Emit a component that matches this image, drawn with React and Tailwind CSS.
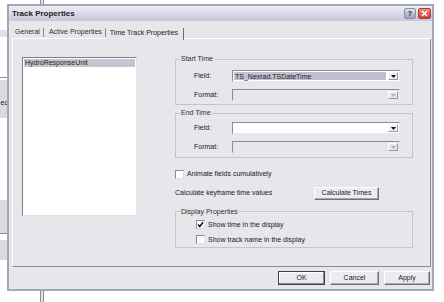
import React from 'react';

const Dropdown = ({ value, disabled, selected }) => (
  <div
    className={`flex h-[12px] w-[168px] items-stretch border border-t-[#8c8c98] border-l-[#8c8c98] border-r-[#e8e8ee] border-b-[#e8e8ee] ${
      disabled ? 'bg-[#e6e6eb]' : 'bg-white'
    }`}
  >
    <div className="flex flex-1 items-center p-[1px]">
      {value && (
        <div className={`flex h-full w-full items-center pl-[1px] ${selected ? 'bg-[#bfc1cf]' : ''}`}>
          <span className="leading-none text-[#202020]">{value}</span>
        </div>
      )}
    </div>
    <div
      className={`m-[1px] flex w-[10px] items-center justify-center border border-t-white border-l-white border-r-[#9a9aa6] border-b-[#9a9aa6] ${
        disabled ? 'bg-[#e6e6eb]' : 'bg-[#f0f0f2]'
      }`}
    >
      <svg width="5" height="3" viewBox="0 0 5 3">
        <path d="M0 0 H5 L2.5 3 Z" fill={disabled ? '#b0b0b8' : '#101010'} />
      </svg>
    </div>
  </div>
);

const Checkbox = ({ checked }) => (
  <div className="flex h-[9px] w-[9px] shrink-0 items-center justify-center border border-t-[#8a8a96] border-l-[#8a8a96] border-r-[#dcdce4] border-b-[#dcdce4] bg-white">
    {checked && (
      <svg width="7" height="7" viewBox="0 0 7 7">
        <path d="M1 3.5 L2.8 5.5 L6 1.2" stroke="#101010" strokeWidth="1.5" fill="none" />
      </svg>
    )}
  </div>
);

const Button = ({ children, width, primary }) => (
  <div
    className={`flex h-[14px] items-center justify-center border bg-[#ececf0] text-[#202020] ${
      primary
        ? 'border-[#404048] shadow-[inset_-1px_-1px_0_#8a8a96,inset_1px_1px_0_#ffffff]'
        : 'border-t-white border-l-white border-r-[#70707c] border-b-[#70707c] shadow-[inset_-1px_-1px_0_#a8a8b4]'
    }`}
    style={{ width }}
  >
    {children}
  </div>
);

const Group = ({ title, className, children }) => (
  <fieldset className={`border border-[#c4c4cc] px-[0px] ${className}`}>
    <legend className="ml-[4px] px-[1px] leading-[8px] text-[#303030]">{title}</legend>
    {children}
  </fieldset>
);

const FieldRows = ({ fieldValue, fieldSelected, fieldWhite }) => (
  <div className="flex flex-col gap-[7px] pl-[18px]">
    <div className="flex items-center">
      <span className="w-[38px] text-[#202020]">Field:</span>
      <Dropdown value={fieldValue} selected={fieldSelected} disabled={!fieldWhite} />
    </div>
    <div className="flex items-center">
      <span className="w-[38px] text-[#202020]">Format:</span>
      <Dropdown disabled />
    </div>
  </div>
);

export default function App() {
  return (
    <div className="relative h-[302px] w-[444px] overflow-hidden bg-white font-['Liberation_Sans',Arial,sans-serif] text-[7px]">
      {/* window behind the dialog */}
      <div className="absolute left-0 top-[30px] h-[7px] w-[8px] bg-[#dce1ea]" />
      <div className="absolute left-0 top-[77px] h-[1px] w-[8px] bg-[#8c8c94]" />
      <div className="absolute left-0 top-[80px] flex h-[38px] w-[8px] items-center justify-end overflow-hidden bg-[#d9d9de] pt-[8px]">
        <span className="whitespace-nowrap text-[#202020]">ec</span>
      </div>
      <div className="absolute left-0 top-[200px] h-[33px] w-[8px] bg-[#dadade]" />
      <div className="absolute left-0 top-[233px] h-[1px] w-[8px] bg-[#8c8c94]" />
      <div className="absolute left-0 top-[240px] h-[20px] w-[8px] bg-[#dadade]" />
      <div className="absolute left-[40px] top-0 h-[5px] w-[4px] border-x border-[#8a8a92] bg-[#e4e4e8]" />
      <div className="absolute left-[40px] top-[290px] h-[12px] w-[4px] border-x border-[#8a8a92] bg-[#e4e4e8]" />

      {/* dialog */}
      <div className="absolute left-[7px] top-[4px] flex h-[287px] w-[427px] flex-col border-2 border-[#a6a6b6] bg-[#e6e6eb]">
        {/* title bar */}
        <div className="flex h-[15px] items-center justify-between bg-gradient-to-b from-[#eeeef4] to-[#c6c8d8] pl-[3px] pr-[1px]">
          <span className="text-[8px] font-bold text-[#1c1c28]">Track Properties</span>
          <div className="flex gap-[2px]">
            <div className="flex h-[11px] w-[12px] items-center justify-center rounded-[2px] border border-[#8a8ea8] bg-gradient-to-b from-[#dcdeea] to-[#9fa4c0] text-[7px] font-bold leading-none text-[#202030]">
              ?
            </div>
            <div className="flex h-[11px] w-[13px] items-center justify-center rounded-[2px] border border-[#a04040] bg-gradient-to-b from-[#f08a78] to-[#d03c2c]">
              <svg width="7" height="7" viewBox="0 0 7 7">
                <path d="M1 1 L6 6 M6 1 L1 6" stroke="#ffffff" strokeWidth="1.6" />
              </svg>
            </div>
          </div>
        </div>

        {/* body */}
        <div className="flex flex-1 flex-col pl-[3px] pr-[1px] pt-[5px]">
          {/* tabs */}
          <div className="relative z-10 flex h-[13px] items-end">
            <div className="flex h-[12px] items-center border-b border-white pl-[3px] pr-[2px] text-[#303030]">
              <span className="pr-[3px]">General</span>
              <div className="h-[9px] w-[1px] bg-[#8a8a96]" />
            </div>
            <div className="flex h-[12px] items-center border-b border-white pl-[3px] text-[#303030]">
              <span className="pr-[3px]">Active Properties</span>
              <div className="h-[9px] w-[1px] bg-[#8a8a96]" />
            </div>
            <div className="flex h-[14px] -mb-[1px] items-center bg-[#e6e6eb] pl-[4px] text-[#202020]">
              <span className="pr-[5px]">Time Track Properties</span>
              <div className="h-[12px] w-[1px] self-end bg-[#6e6e7a]" />
            </div>
            <div className="flex-1 border-b border-white" />
          </div>

          {/* tab panel */}
          <div className="flex h-[228px] border-b border-r border-b-[#8a8a96] border-r-[#8a8a96] border-l border-l-white pl-[9px] pt-[18px]">
            {/* list */}
            <div className="h-[159px] w-[115px] border border-t-[#7c7c88] border-l-[#7c7c88] border-r-[#e2e2e8] border-b-[#e2e2e8] bg-white p-[1px]">
              <div className="flex h-[8px] items-center bg-[#c6c6d2] pl-[1px] text-[#202020]">HydroResponseUnit</div>
            </div>

            {/* right column */}
            <div className="ml-[38px] -mt-[2px] flex w-[238px] flex-col">
              <Group title="Start Time" className="pb-[3px]">
                <div className="pt-[7px]">
                  <FieldRows fieldValue="TS_Nexrad.TSDateTime" fieldSelected fieldWhite />
                </div>
              </Group>

              <Group title="End Time" className="mt-[4px] pb-[4px]">
                <div className="pt-[5px]">
                  <FieldRows fieldWhite />
                </div>
              </Group>

              <div className="mt-[11px] flex items-center gap-[3px]">
                <Checkbox />
                <span className="text-[#202020]">Animate fields cumulatively</span>
              </div>

              <div className="mt-[7px] flex items-center">
                <span className="w-[139px] text-[#202020]">Calculate keyframe time values</span>
                <div className="flex h-[13px] w-[65px] items-center justify-center border border-t-white border-l-white border-r-[#70707c] border-b-[#70707c] bg-[#ececf0] text-[#202020] shadow-[inset_-1px_-1px_0_#a8a8b4]">
                  Calculate Times
                </div>
              </div>

              <Group title="Display Properties" className="mt-[8px] pb-[3px]">
                <div className="flex flex-col gap-[6px] pl-[20px] pt-[4px] leading-[9px]">
                  <div className="flex h-[9px] items-center gap-[3px]">
                    <Checkbox checked />
                    <span className="text-[#202020]">Show time in the display</span>
                  </div>
                  <div className="flex h-[9px] items-center gap-[3px]">
                    <Checkbox />
                    <span className="text-[#202020]">Show track name in the display</span>
                  </div>
                </div>
              </Group>
            </div>
          </div>

          {/* bottom buttons */}
          <div className="mt-[4px] flex justify-end gap-[5px] pr-[1px]">
            <Button width="47px" primary>OK</Button>
            <Button width="49px">Cancel</Button>
            <Button width="46px">Apply</Button>
          </div>
        </div>
      </div>
    </div>
  );
}
